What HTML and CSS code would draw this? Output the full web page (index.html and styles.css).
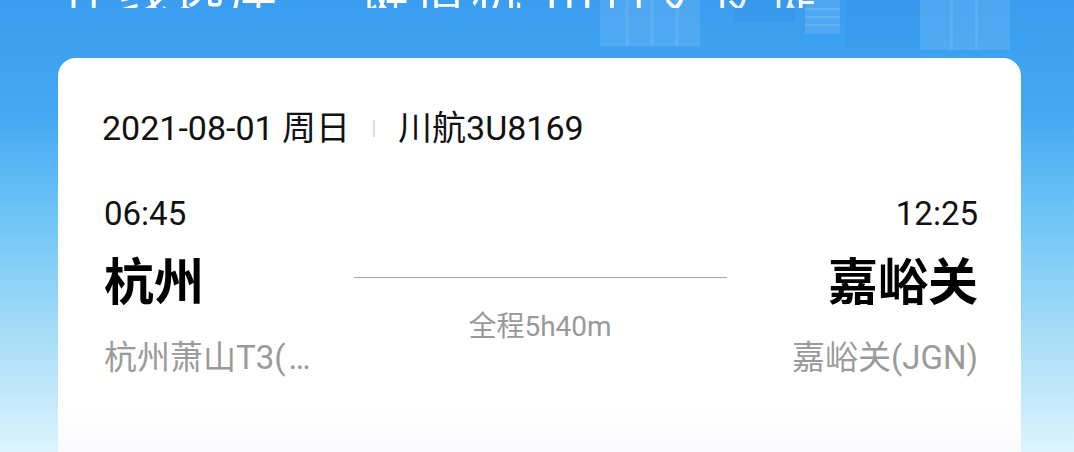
FILE: index.html
```html
<!DOCTYPE html>
<html lang="zh-CN">
<head>
<meta charset="utf-8">
<link rel="stylesheet" href="styles.css">
</head>
<body>
<div class="page">
  <header class="hero">
    <div class="title-clip"><h1 class="title">在线选座 一键值机 出行更便捷</h1></div>
    <svg class="skyline" width="460" height="50" viewBox="0 0 460 50" aria-hidden="true">
      <rect x="30" y="0" width="100" height="46" fill="rgba(255,255,255,0.10)"/>
      <rect x="55" y="0" width="4" height="46" fill="rgba(255,255,255,0.08)"/>
      <rect x="80" y="0" width="4" height="46" fill="rgba(255,255,255,0.08)"/>
      <rect x="105" y="0" width="4" height="46" fill="rgba(255,255,255,0.08)"/>
      <rect x="165" y="0" width="60" height="22" fill="rgba(20,110,200,0.10)"/>
      <rect x="235" y="0" width="35" height="34" fill="rgba(255,255,255,0.10)"/>
      <rect x="235" y="8" width="35" height="2" fill="rgba(255,255,255,0.12)"/>
      <rect x="235" y="16" width="35" height="2" fill="rgba(255,255,255,0.12)"/>
      <rect x="235" y="24" width="35" height="2" fill="rgba(255,255,255,0.12)"/>
      <rect x="275" y="0" width="75" height="48" fill="rgba(20,110,200,0.07)"/>
      <rect x="350" y="0" width="90" height="50" fill="rgba(255,255,255,0.10)"/>
      <rect x="380" y="0" width="3" height="50" fill="rgba(255,255,255,0.08)"/>
      <rect x="405" y="0" width="3" height="50" fill="rgba(255,255,255,0.08)"/>
    </svg>
  </header>
  <section class="card">
    <div class="flight-meta">
      <span class="date">2021-08-01 周日</span>
      <span class="sep"></span>
      <span class="flight-no">川航3U8169</span>
    </div>
    <div class="route">
      <div class="end end-dep">
        <div class="time">06:45</div>
        <div class="city">杭州</div>
        <div class="airport">杭州萧山T3(<span class="dots">…</span></div>
      </div>
      <div class="middle">
        <div class="line"></div>
        <div class="duration">全程5h40m</div>
      </div>
      <div class="end end-arr">
        <div class="time">12:25</div>
        <div class="city">嘉峪关</div>
        <div class="airport">嘉峪关(JGN)</div>
      </div>
    </div>
  </section>
</div>
</body>
</html>
```
FILE: styles.css
```css
* { box-sizing: border-box; margin: 0; padding: 0; }
html, body { width: 1074px; height: 452px; overflow: hidden; }
body {
  font-family: Roboto, "Noto Sans CJK SC", sans-serif;
  background: linear-gradient(180deg, #3a9df0 0%, #43a8f2 25%, #72c7f6 50%, #a8ddf8 75%, #dcf4fd 100%);
  color: #111;
}
.page { width: 1074px; }
.hero {
  position: relative;
  height: 58px;
}
.title-clip {
  height: 8px;
  overflow: hidden;
  display: flex;
  align-items: flex-end;
  padding-left: 62px;
}
.title {
  font-family: "Noto Sans CJK SC", sans-serif;
  font-size: 50px;
  line-height: 50px;
  font-weight: 400;
  color: #fff;
  letter-spacing: 6px;
  white-space: nowrap;
  margin-bottom: -6px;
}
.skyline {
  position: absolute;
  left: 570px;
  top: 0;
}
.card {
  margin-left: 58px;
  width: 963px;
  height: 420px;
  background: linear-gradient(180deg, #ffffff 0%, #ffffff 82%, #f6f7fa 100%);
  border-radius: 18px 18px 0 0;
  padding: 50px 43px 0 44px;
}
.flight-meta {
  display: flex;
  align-items: center;
  height: 40px;
  font-size: 34px;
  line-height: 40px;
  color: #111;
}
.sep {
  width: 2px;
  height: 17px;
  background: #ddd;
  margin: 0 23px 0 23px;
}
.route {
  display: grid;
  grid-template-columns: 1fr 373px 1fr;
  margin-top: 48px;
}
.end { display: flex; flex-direction: column; }
.end-dep { align-items: flex-start; padding-left: 2px; }
.end-arr { align-items: flex-end; }
.time {
  font-size: 33px;
  line-height: 36px;
  color: #111;
}
.city {
  font-family: "Noto Sans CJK SC", sans-serif;
  font-size: 50px;
  line-height: 60px;
  font-weight: 700;
  color: #000;
  margin-top: 16px;
}
.airport {
  font-size: 33px;
  line-height: 40px;
  color: #9a9a9a;
  margin-top: 30px;
}
.dots { letter-spacing: 0; margin-left: 3px; }
.middle {
  display: flex;
  flex-direction: column;
  align-items: center;
}
.line {
  width: 100%;
  height: 1px;
  background: #a8a8a8;
  margin-top: 81px;
}
.duration {
  font-size: 28px;
  line-height: 32px;
  color: #999;
  margin-top: 33px;
}
```
